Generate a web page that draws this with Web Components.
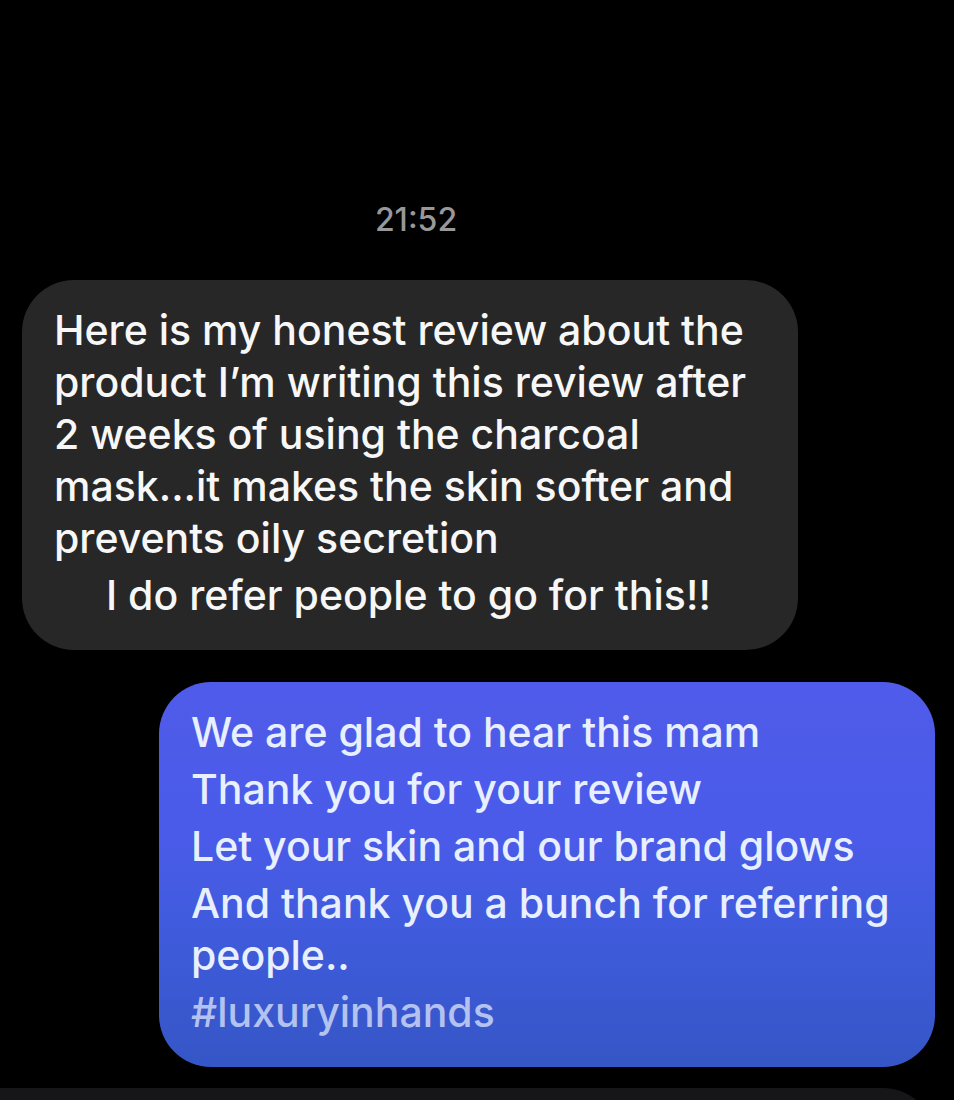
<!DOCTYPE html>
<html lang="en">
<head>
<meta charset="utf-8">
<meta name="viewport" content="width=device-width, initial-scale=1">
<title>Chat</title>
<style>
  html { background: #000; }
  body { margin: 0; font-family: Inter, "Liberation Sans", sans-serif; }
</style>
</head>
<body>
<chat-thread>
  <chat-time slot="time">21:52</chat-time>
  <chat-bubble>
    <chat-line>Here is my honest review about the product I’m writing this review after 2 weeks of using the charcoal mask...it makes the skin softer and prevents oily secretion</chat-line>
    <chat-line indent>I do refer people to go for this!!</chat-line>
  </chat-bubble>
  <chat-bubble sent>
    <chat-line>We are glad to hear this mam</chat-line>
    <chat-line>Thank you for your review</chat-line>
    <chat-line>Let your skin and our brand glows</chat-line>
    <chat-line>And thank you a bunch for referring people..</chat-line>
    <chat-line muted>#luxuryinhands</chat-line>
  </chat-bubble>
  <chat-dock slot="dock"></chat-dock>
</chat-thread>
<script>
  const define = (name, html) => customElements.define(name, class extends HTMLElement {
    constructor() {
      super();
      this.attachShadow({ mode: "open" }).innerHTML = html;
    }
  });

  define("chat-thread", `
    <style>
      :host { display: flex; flex-direction: column; height: 100vh; overflow: hidden; background: #000; }
      header { flex: none; padding: 200px 122px 40px 0; }
      main { flex: none; display: flex; flex-direction: column; gap: 32px; padding: 0 19px 21px 22px; }
    </style>
    <header><slot name="time"></slot></header>
    <main><slot></slot></main>
    <slot name="dock"></slot>`);

  define("chat-time", `
    <style>
      :host { display: block; text-align: center; color: #98989a; font-size: 32px; line-height: 40px; font-weight: 500; }
      time { display: block; }
    </style>
    <time datetime="21:52"><slot></slot></time>`);

  define("chat-bubble", `
    <style>
      :host {
        display: flex; flex-direction: column; gap: 5px; box-sizing: border-box;
        width: 85%; padding: 24px 32px 29px; border-radius: 52px;
        background: #272727; color: #f7f7f7; align-self: flex-start;
      }
      :host([sent]) {
        align-self: flex-end; color: #e8efff;
        background: linear-gradient(#505bea, #4a5be9 40%, #3f5bdc 65%, #3556c6);
      }
    </style>
    <slot></slot>`);

  define("chat-line", `
    <style>
      :host { display: block; font-size: 41px; line-height: 52px; font-weight: 550; }
      :host([indent]) { padding-left: 52px; }
      :host([muted]) { color: #b4c2f0; }
    </style>
    <slot></slot>`);

  define("chat-dock", `
    <style>
      :host { display: block; flex: 1; min-height: 12px; overflow: hidden; }
      div { height: 104px; margin: 0 19px 0 -52px; border-radius: 52px; background: #161518; }
    </style>
    <div></div>`);
</script>
</body>
</html>
